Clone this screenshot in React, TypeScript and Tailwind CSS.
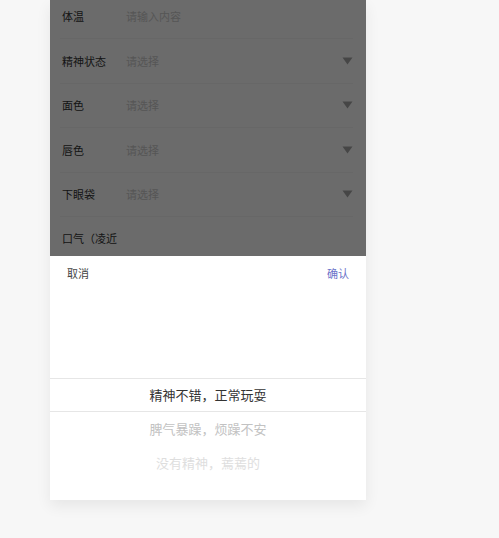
import React from "react";

const rows = [
  { label: "体温", ph: "请输入内容", arrow: false },
  { label: "精神状态", ph: "请选择", arrow: true },
  { label: "面色", ph: "请选择", arrow: true },
  { label: "唇色", ph: "请选择", arrow: true },
  { label: "下眼袋", ph: "请选择", arrow: true },
  { label: "口气（凌近", ph: "", arrow: false },
];

function Arrow() {
  return (
    <svg width="11" height="8" viewBox="0 0 11 8" className="block">
      <path d="M0.5 0.5 L10.5 0.5 L5.5 7.5 Z" fill="#a8a8a8" />
    </svg>
  );
}

export default function App() {
  return (
    <div
      className="w-full h-[538px] bg-[#f7f7f7] overflow-hidden"
      style={{ fontFamily: '"Noto Sans CJK SC", "Noto Sans", sans-serif' }}
    >
      <div className="ml-[50px] w-[316px] bg-white shadow-[0_6px_14px_rgba(0,0,0,0.07)]">
        <div className="relative h-[256px] overflow-hidden">
          <div className="-mt-[5px] flex flex-col">
            {rows.map((r, i) => (
              <div
                key={i}
                className="ml-[10px] mr-[13px] h-[44.4px] flex items-center border-b border-[#f6f6f6]"
              >
                <div className="w-[66px] pl-[2px] text-[11px] text-[#333333] whitespace-nowrap">
                  {r.label}
                </div>
                <div className="flex-1 text-[11px] text-[#cccccc]">{r.ph}</div>
                {r.arrow && (
                  <div>
                    <Arrow />
                  </div>
                )}
              </div>
            ))}
          </div>
          <div className="absolute inset-0 bg-[rgba(0,0,0,0.58)]" />
        </div>
        <div className="h-[34px] px-[17px] flex items-center justify-between text-[11px]">
          <span className="text-[#444444]">取消</span>
          <span className="text-[#6b73c9]">确认</span>
        </div>
        <div className="relative h-[210px] overflow-hidden">
          <div className="pt-[88px] flex flex-col">
            <div className="h-[34px] flex items-center justify-center text-[13px] text-[#333333]">
              精神不错，正常玩耍
            </div>
            <div className="h-[34px] flex items-center justify-center text-[13px] text-[#c2c2c2]">
              脾气暴躁，烦躁不安
            </div>
            <div className="h-[34px] flex items-center justify-center text-[13px] text-[#dedede]">
              没有精神，蔫蔫的
            </div>
          </div>
          <div className="absolute left-0 right-0 top-[88px] h-[34px] border-y border-[#e6e6e6]" />
        </div>
      </div>
    </div>
  );
}
